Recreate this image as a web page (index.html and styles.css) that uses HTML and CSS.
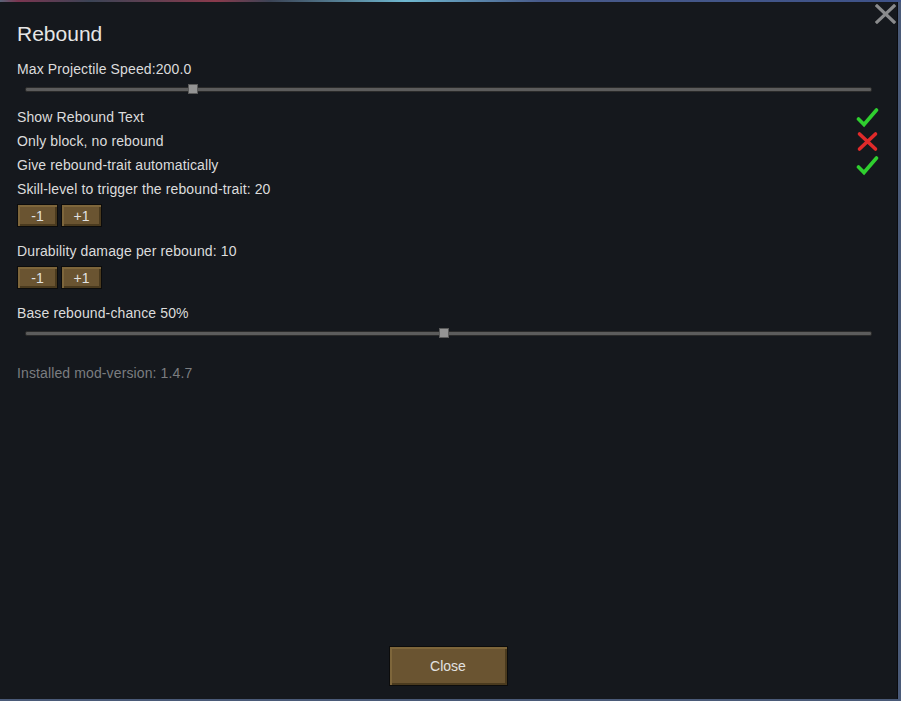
FILE: index.html
```html
<!DOCTYPE html>
<html lang="en">
<head>
    <meta charset="UTF-8">
    <title>Rebound - Mod Settings</title>
    <link rel="stylesheet" href="styles.css">
</head>
<body>
    <div class="desktop-strip"></div>
    <div class="window">
        <!-- Close cross -->
        <button class="close-x" aria-label="Close">
            <svg width="21" height="20" viewBox="0 0 21 20">
                <path d="M2 2 L19 18 M19 2 L2 18" stroke="#8a8b8d" stroke-width="3.2" stroke-linecap="square"/>
            </svg>
        </button>

        <h1 class="title">Rebound</h1>

        <div class="row">Max Projectile Speed:200.0</div>
        <div class="slider">
            <div class="track"></div>
            <div class="thumb" style="left: 19.8%"></div>
        </div>

        <div class="options">
            <div class="row">
                <span>Show Rebound Text</span>
                <svg class="icon" width="23" height="21" viewBox="0 0 23 21">
                    <path d="M2.5 12 L8 17.5 L20.5 3" fill="none" stroke="#2fcf2f" stroke-width="3.6" stroke-linecap="round"/>
                </svg>
            </div>
            <div class="row">
                <span>Only block, no rebound</span>
                <svg class="icon" width="23" height="21" viewBox="0 0 23 21">
                    <path d="M3.5 3 L19.5 18 M19.5 3 L3.5 18" fill="none" stroke="#e02a2a" stroke-width="3.6" stroke-linecap="round"/>
                </svg>
            </div>
            <div class="row">
                <span>Give rebound-trait automatically</span>
                <svg class="icon" width="23" height="21" viewBox="0 0 23 21">
                    <path d="M2.5 12 L8 17.5 L20.5 3" fill="none" stroke="#2fcf2f" stroke-width="3.6" stroke-linecap="round"/>
                </svg>
            </div>
            <div class="row">Skill-level to trigger the rebound-trait: 20</div>
        </div>
        <div class="steppers">
            <button class="btn small">-1</button>
            <button class="btn small">+1</button>
        </div>

        <div class="row gap">Durability damage per rebound: 10</div>
        <div class="steppers">
            <button class="btn small">-1</button>
            <button class="btn small">+1</button>
        </div>

        <div class="row gap">Base rebound-chance 50%</div>
        <div class="slider">
            <div class="track"></div>
            <div class="thumb" style="left: 49.5%"></div>
        </div>

        <div class="row version">Installed mod-version: 1.4.7</div>

        <div class="footer">
            <button class="btn close-btn">Close</button>
        </div>
    </div>
</body>
</html>
```

FILE: styles.css
```css
* {
    margin: 0;
    padding: 0;
    box-sizing: border-box;
}

html, body {
    height: 100%;
    overflow: hidden;
}

body {
    background-color: #4a5a78;
    font-family: 'Liberation Sans', Arial, sans-serif;
    color: #dcdcdc;
}

.desktop-strip {
    height: 2px;
    background: linear-gradient(90deg, #5a6378 0%, #7b3550 2%, #3b4456 10%, #8a3a4c 24%, #3b4456 30%, #6fb8d0 45%, #485a8a 60%, #3e5288 100%);
}

.window {
    position: relative;
    width: 898px;
    height: 697px;
    background-color: #15181d;
    border-right: 1px solid #0b0c0f;
    padding: 18px 17px 13px 17px;
    display: flex;
    flex-direction: column;
}

.close-x {
    position: absolute;
    top: 2px;
    right: 1px;
    width: 21px;
    height: 20px;
    background: none;
    border: none;
    cursor: pointer;
}

.title {
    font-size: 21px;
    font-weight: normal;
    line-height: 28px;
    color: #e6e6e6;
    margin-bottom: 9px;
}

.row {
    height: 24px;
    line-height: 24px;
    font-size: 14px;
    letter-spacing: 0.12px;
    display: flex;
    justify-content: space-between;
    align-items: center;
}

.row.gap {
    margin-top: 12px;
}

.icon {
    display: block;
    margin-right: 1px;
}

.slider {
    position: relative;
    height: 16px;
    margin: 0 8px 8px 8px;
}

.slider .track {
    position: absolute;
    top: 6px;
    left: 0;
    right: 0;
    height: 5px;
    background-color: #5c5c5c;
    border: 1px solid #2a2a2a;
    border-radius: 2px;
}

.slider .thumb {
    position: absolute;
    top: 3px;
    width: 10px;
    height: 10px;
    margin-left: -5px;
    background-color: #949494;
    border: 1px solid #5a5a5a;
}

.steppers {
    display: flex;
    gap: 3px;
    margin-top: 3px;
}

.btn {
    font-family: 'Liberation Sans', Arial, sans-serif;
    color: #e2e2e2;
    background-color: #6a5431;
    border: 1px solid #0c0c0c;
    box-shadow: inset 2px 2px 0 #7e663b, inset -2px -2px 0 #4a3a1e;
    cursor: pointer;
}

.btn.small {
    width: 41px;
    height: 23px;
    font-size: 14px;
}

.version {
    margin-top: 12px;
    color: #7b7d80;
}

.footer {
    margin-top: auto;
    display: flex;
    justify-content: center;
}

.close-btn {
    width: 119px;
    height: 40px;
    font-size: 14px;
    margin-right: 1px;
}
```
